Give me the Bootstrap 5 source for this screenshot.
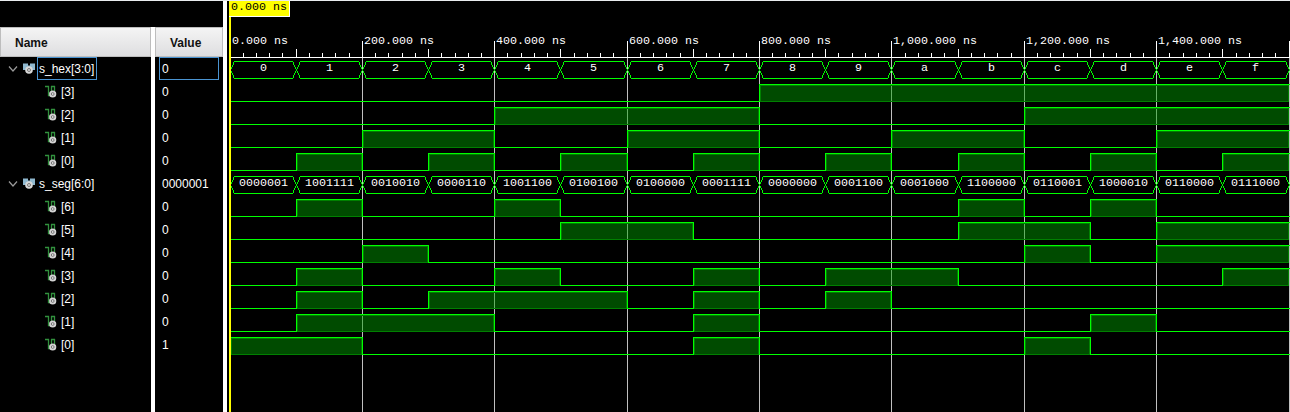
<!DOCTYPE html>
<html lang="en">
<head>
<meta charset="utf-8">
<title>Waveform viewer</title>
<link href="https://cdn.jsdelivr.net/npm/bootstrap@5.3.0/dist/css/bootstrap.min.css" rel="stylesheet">
<style>
body{background:#000;color:#fff;font:12px/23px "Liberation Sans",Arial,sans-serif;height:412px;overflow:hidden}
.viewer{height:412px;border-top:1px solid #e9ecee}
.names{width:151px}
.values{width:68px}
.gutter{width:4px;background:#fff}
.gutter-low{margin-top:26px}
.wave{width:1063px}
.head{height:30px;margin-top:26px;border:1px solid #bdbdbd;background:linear-gradient(#f4f4f4,#dedee0);color:#111;font-weight:700;padding-left:14px;line-height:30px}
.sig{height:23px;white-space:pre}
.bus{padding-left:8px}
.bit{padding-left:45px}
.lbl{height:23px;line-height:23px;padding:0 2px 0 1px;border:1px solid transparent}
.bit .lbl{padding-left:0}
.val{margin:0 4px 0 4px;height:23px;line-height:23px;padding-left:2px;border:1px solid transparent}
.picked{border-color:#4a94d2}
.wave text{font:11.667px "Liberation Mono","Courier New",monospace;fill:#fff;white-space:pre}
.wave .cursor-text{fill:#000}
</style>
</head>
<body>
<svg class="d-none">
  <symbol id="busIcon" viewBox="0 0 12 12"><path d="M0 .5h5v2h2v-2h5v6.500H9.500L6 9 2.500 7H0z" fill="#8fb8cf"/><circle cx="6" cy="7" r="3.800" fill="#d8d8d8"/><circle cx="6" cy="7" r="1.500" fill="#ddd" stroke="#777"/></symbol>
  <symbol id="bitIcon" viewBox="0 0 12 13"><path d="M0 1.500h3.500v9H6M6.500 6V.9M9.500 6V.9M6 1.500h4" fill="none" stroke="#31913d" stroke-width="1.300"/><circle cx="7.700" cy="9" r="3.600" fill="#d4d4d4"/><circle cx="7.700" cy="9" r="1.400" fill="#ddd" stroke="#777"/></symbol>
</svg>
<main class="viewer d-flex">
  <section class="names flex-shrink-0"><div class="head">Name</div><div id="names"></div></section>
  <div class="gutter gutter-low flex-shrink-0"></div>
  <section class="values flex-shrink-0"><div class="head">Value</div><div id="values"></div></section>
  <div class="gutter flex-shrink-0"></div>
  <section class="wave flex-shrink-0"><svg id="wave" class="d-block" width="1063" height="411" viewBox="227 1 1063 411" shape-rendering="crispEdges"></svg></section>
</main>
<script src="https://cdn.jsdelivr.net/npm/bootstrap@5.3.0/dist/js/bootstrap.bundle.min.js"></script>
<script>
const hex = [...'0123456789abcdef'];
const seg = ['0000001','1001111','0010010','0000110','1001100','0100100','0100000','0001111','0000000','0001100','0001000','1100000','0110001','1000010','0110000','0111000'];
const rows = [{name:'s_hex[3:0]', value:'0', bus:hex}];
for (let b = 3; b >= 0; b--) rows.push({name:`[${b}]`, value:'0', bits:hex.map((h, i) => i >> b & 1)});
rows.push({name:'s_seg[6:0]', value:'0000001', bus:seg});
for (let b = 6; b >= 0; b--) rows.push({name:`[${b}]`, value:seg[0][6 - b], bits:seg.map(s => +s[6 - b])});

const nameList = document.getElementById('names');
const valueList = document.getElementById('values');
nameList.innerHTML = rows.map((r, i) => r.bus
  ? `<div class="sig bus d-flex align-items-center"><svg width="10" height="8" class="flex-shrink-0"><path d="M1 1.500l4 4.500 4-4.500" fill="none" stroke="#9a9a9a" stroke-width="1.200"/></svg><svg width="12" height="12" class="flex-shrink-0" style="margin:0 2px 0 5px"><use href="#busIcon"/></svg><span class="lbl ${i ? '' : 'picked'}">${r.name}</span></div>`
  : `<div class="sig bit d-flex align-items-center"><svg width="12" height="13" class="flex-shrink-0" style="margin-right:3px"><use href="#bitIcon"/></svg><span class="lbl">${r.name}</span></div>`).join('');
valueList.innerHTML = rows.map((r, i) => `<div class="sig"><div class="val ${i ? '' : 'picked'}">${r.value}</div></div>`).join('');

const X = i => Math.floor(230 + i * 66.19);
const box = (x, y, w, h, c) => `<rect x="${x}" y="${y}" width="${w}" height="${h}" fill="${c}"/>`;
let s = '';
/* grid and time ruler */
for (let i = 2; i <= 16; i += 2) s += box(X(i), 58, 1, 354, '#c0c0c0');
s += box(230, 57, 1060, 1, '#fff');
for (let k = 0; k <= 80; k++) {
  const h = k % 10 === 0 ? 16 : k % 5 === 0 ? 8 : 4;
  s += box(X(k / 5), 57 - h, 1, h, '#fff');
}
for (let i = 0; i < 16; i += 2) s += `<text x="${X(i) + 2}" y="44">${(i * 100).toLocaleString('en-US')}.000 ns</text>`;
/* signals */
rows.forEach((r, n) => {
  const t = 61 + 23 * n, b = t + 17;
  for (let i = 0; i < 16; i++) {
    const x = X(i), e = X(i + 1);
    if (r.bus) {
      s += box(x + 4, t, e - x - 7, 1, '#0f0') + box(x + 4, b, e - x - 7, 1, '#0f0');
      [0, 1, 1, 2, 2, 3, 3, 3].forEach((d, k) => {
        for (const y of [t + 8 - k, t + 9 + k]) s += box(x + d, y, 1, 1, '#0f0') + box(e - d, y, 1, 1, '#0f0');
      });
      const w = r.bus[i].length * 7;
      s += `<text x="${Math.round((x + e - w) / 2)}" y="${t + 10}">${r.bus[i]}</text>`;
    } else if (r.bits[i]) {
      const first = !r.bits[i - 1], last = !r.bits[i + 1];
      s += `<rect x="${x}" y="${t}" width="${e - x}" height="18" fill="#00a000" fill-opacity=".47"/>`;
      s += box(x, t, e - x + 1, 1, '#0f0') + box(x, t + 1, e - x, 1, '#008000') + box(x, b, e - x, 1, '#008000');
      if (first) s += box(x + 1, t + 1, 1, 17, '#008000') + (i ? box(x, t, 1, 18, '#0f0') : '');
      if (last) s += box(e - 1, t + 1, 1, 17, '#008000') + (i < 15 ? box(e, t, 1, 18, '#0f0') : '');
    } else s += box(x, b, e - x + 1, 1, '#0f0');
  }
});
/* time cursor */
s += box(229, 1, 2, 411, '#ff0') + box(229, 1, 61, 16, '#fff') + box(229, 1, 60, 15, '#ff0');
s += '<text class="cursor-text" x="231" y="10">0.000 ns</text>';
document.getElementById('wave').innerHTML = s;
</script>
</body>
</html>
